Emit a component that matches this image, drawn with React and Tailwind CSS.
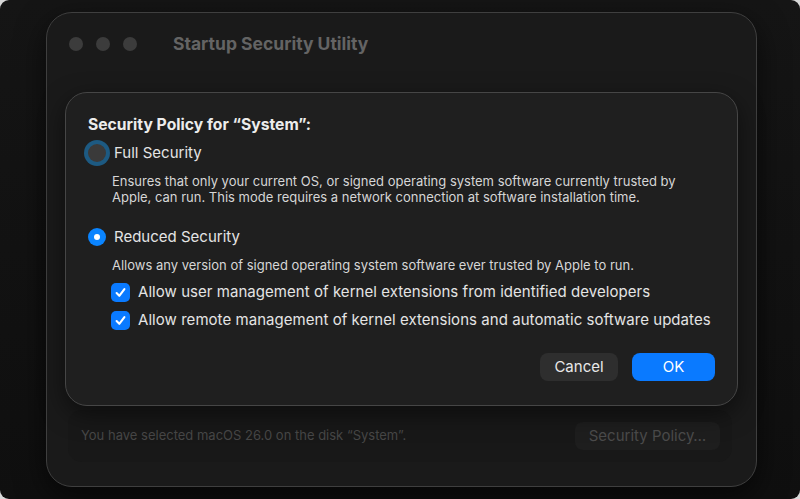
import React from "react";

const font = { fontFamily: "Inter, 'Noto Sans', sans-serif" };

function Check() {
  return (
    <div className="w-[19px] h-[19px] rounded-[5px] bg-[#0a7aff] flex items-center justify-center shrink-0">
      <svg width="13" height="13" viewBox="0 0 13 13" fill="none">
        <path d="M2.6 7.1 L5.3 9.8 L10.4 3.2" stroke="white" strokeWidth="2.1" strokeLinecap="round" strokeLinejoin="round" />
      </svg>
    </div>
  );
}

export default function App() {
  return (
    <div className="w-[800px] h-[499px] bg-[#d8d8d8]" style={font}>
      <div className="w-full h-full rounded-[9px] bg-gradient-to-b from-[#151515] to-[#0f0f0f] overflow-hidden pt-[12px] pl-[46px]">
        <div className="relative w-[711px] h-[475px] rounded-[26px] border border-[#3f3f3f] bg-[#1a1a1a] shadow-[0_10px_30px_rgba(0,0,0,0.6)] flex flex-col">
          <div className="h-[62px] flex items-center pl-[22px] shrink-0">
            <div className="flex gap-[13px]">
              <div className="w-[14px] h-[14px] rounded-full bg-[#3c3c3c]" />
              <div className="w-[14px] h-[14px] rounded-full bg-[#3c3c3c]" />
              <div className="w-[14px] h-[14px] rounded-full bg-[#3c3c3c]" />
            </div>
            <div className="ml-[36px] text-[17.5px] font-bold text-[#646464] tracking-[0px]">Startup Security Utility</div>
          </div>
          <div className="flex-1" />
          <div className="ml-[21px] mr-[24px] mb-[24px] h-[52px] rounded-[14px] bg-[#181818] flex items-center justify-between pl-[13px] pr-[12px]">
            <div className="text-[13px] text-[#474747]">You have selected macOS 26.0 on the disk “System”.</div>
            <div className="w-[145px] h-[28px] rounded-[8px] bg-[#1e1e1e] flex items-center justify-center text-[15px] text-[#4b4b4b]">Security Policy…</div>
          </div>

          <div className="absolute left-[18px] top-[79px] w-[673px] h-[314px] rounded-[22px] border border-[#464646] bg-[#1f1f1f] shadow-[0_8px_24px_rgba(0,0,0,0.5)] pt-[22px] px-[22px] flex flex-col">
            <div className="text-[15.7px] leading-[20px] font-bold text-[#ececec]">Security Policy for “System”:</div>
            <div className="mt-[6px] h-[24px] flex items-center">
              <div className="w-[18px] h-[18px] rounded-full bg-[#3a3a3a] ring-[4px] ring-[#1d5a82] shrink-0" />
              <div className="ml-[8px] text-[15px] text-[#e4e4e4]">Full Security</div>
            </div>
            <div className="mt-[8px] ml-[24px] text-[13px] leading-[16px] text-[#d6d6d6]">
              Ensures that only your current OS, or signed operating system software currently trusted by<br />
              Apple, can run. This mode requires a network connection at software installation time.
            </div>
            <div className="mt-[20px] h-[24px] flex items-center">
              <div className="w-[18px] h-[18px] rounded-full bg-[#0a84ff] flex items-center justify-center shrink-0">
                <div className="w-[6px] h-[6px] rounded-full bg-white" />
              </div>
              <div className="ml-[8px] text-[15px] text-[#e4e4e4]">Reduced Security</div>
            </div>
            <div className="mt-[8px] ml-[24px] text-[13px] leading-[16px] text-[#d6d6d6]">
              Allows any version of signed operating system software ever trusted by Apple to run.
            </div>
            <div className="mt-[7px] ml-[23px] h-[24px] flex items-center">
              <Check />
              <div className="ml-[8px] text-[15px] tracking-[0.05px] text-[#e4e4e4]">Allow user management of kernel extensions from identified developers</div>
            </div>
            <div className="mt-[4px] ml-[23px] h-[24px] flex items-center">
              <Check />
              <div className="ml-[8px] text-[15px] tracking-[0.05px] text-[#e4e4e4]">Allow remote management of kernel extensions and automatic software updates</div>
            </div>
            <div className="mt-[21px] flex justify-end gap-[14px]">
              <div className="w-[78px] h-[28px] rounded-[8px] bg-[#2e2e2e] flex items-center justify-center text-[15px] text-[#e8e8e8]">Cancel</div>
              <div className="w-[83px] h-[28px] rounded-[8px] bg-[#0a7aff] flex items-center justify-center text-[15px] text-white">OK</div>
            </div>
          </div>
        </div>
      </div>
    </div>
  );
}
